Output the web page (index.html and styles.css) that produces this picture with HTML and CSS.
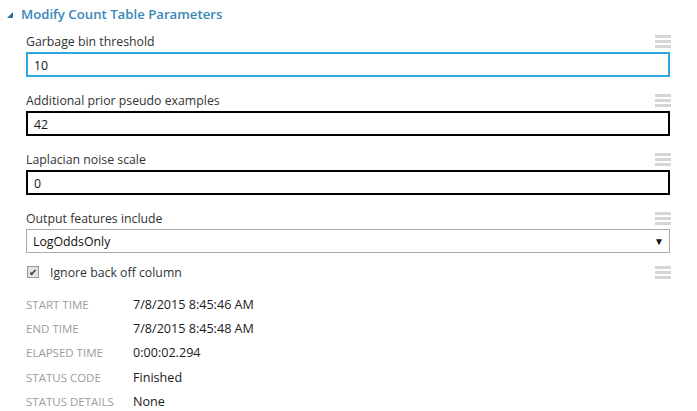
FILE: index.html
```html
<!DOCTYPE html>
<html>
<head>
<meta charset="utf-8">
<link rel="stylesheet" href="styles.css">
</head>
<body>
<div class="panel">
  <div class="header">
    <span class="tri"></span>
    <span class="title">Modify Count Table Parameters</span>
  </div>
  <div class="params">
    <div class="param">
      <div class="label-row"><span class="label">Garbage bin threshold</span><span class="ham"><i></i><i></i><i></i></span></div>
      <div class="input focus">10</div>
    </div>
    <div class="param">
      <div class="label-row"><span class="label">Additional prior pseudo examples</span><span class="ham"><i></i><i></i><i></i></span></div>
      <div class="input">42</div>
    </div>
    <div class="param">
      <div class="label-row"><span class="label">Laplacian noise scale</span><span class="ham"><i></i><i></i><i></i></span></div>
      <div class="input">0</div>
    </div>
    <div class="param">
      <div class="label-row"><span class="label">Output features include</span><span class="ham"><i></i><i></i><i></i></span></div>
      <div class="select"><span>LogOddsOnly</span><span class="arrow">&#9660;</span></div>
    </div>
    <div class="check-row">
      <span class="check"><span class="box">&#10004;</span><span class="label">Ignore back off column</span></span>
      <span class="ham"><i></i><i></i><i></i></span>
    </div>
  </div>
  <div class="stats">
    <div class="stat"><span class="k">START TIME</span><span class="v">7/8/2015 8:45:46 AM</span></div>
    <div class="stat"><span class="k">END TIME</span><span class="v">7/8/2015 8:45:48 AM</span></div>
    <div class="stat"><span class="k">ELAPSED TIME</span><span class="v">0:00:02.294</span></div>
    <div class="stat"><span class="k">STATUS CODE</span><span class="v">Finished</span></div>
    <div class="stat"><span class="k">STATUS DETAILS</span><span class="v">None</span></div>
  </div>
</div>
</body>
</html>
```
FILE: styles.css
```css
html, body {
  margin: 0;
  padding: 0;
  background: #fff;
}
body {
  font-family: "Segoe UI", "Open Sans", "Noto Sans", sans-serif;
  color: #222;
  font-size: 12.3px;
}
.panel {
  width: 697px;
  height: 411px;
  overflow: hidden;
}
.header {
  height: 28px;
  display: flex;
  align-items: center;
  padding-left: 7px;
}
.tri {
  width: 0;
  height: 0;
  border-left: 6px solid transparent;
  border-bottom: 6px solid #2e6f9a;
  margin-right: 8px;
  margin-top: 2px;
}
.title {
  color: #3a87b8;
  font-weight: 600;
  font-size: 13.2px;
}
.params {
  padding-left: 26px;
  width: 644px;
  padding-top: 4px;
}
.param {
  margin-bottom: 14px;
}
.label-row {
  height: 18px;
  margin-bottom: 2px;
  display: flex;
  justify-content: space-between;
  align-items: center;
}
.label {
  color: #333;
}
.ham {
  width: 16px;
  display: flex;
  flex-direction: column;
  gap: 2px;
  margin-right: -1px;
}
.ham i {
  display: block;
  height: 3px;
  background: #d6d6d6;
}
.input {
  box-sizing: border-box;
  height: 25px;
  border: 2px solid #000;
  padding-left: 6px;
  padding-top: 1px;
  display: flex;
  align-items: center;
  color: #111;
}
.input.focus {
  border-color: #2ea8df;
}
.select {
  box-sizing: border-box;
  height: 24px;
  border: 1px solid #ababab;
  padding-left: 6px;
  padding-right: 5px;
  display: flex;
  align-items: center;
  justify-content: space-between;
  color: #111;
  margin-top: 1px;
}
.arrow {
  font-size: 10px;
  color: #111;
}
.check-row {
  display: flex;
  justify-content: space-between;
  align-items: center;
  margin-top: -4px;
  height: 18px;
}
.check {
  display: flex;
  align-items: center;
}
.box {
  box-sizing: border-box;
  width: 12px;
  height: 12px;
  border: 1px solid #9a9a9a;
  background: #e2e2e2;
  margin-left: 1px;
  margin-right: 11px;
  font-size: 10px;
  line-height: 10px;
  color: #333;
  text-align: center;
}
.stats {
  padding-left: 26px;
  padding-top: 11px;
}
.stat {
  height: 24.3px;
  display: flex;
  align-items: center;
}
.k {
  width: 107px;
  color: #9c9c9c;
  font-size: 11.5px;
}
.v {
  color: #1a1a1a;
  font-size: 12.6px;
}
```
